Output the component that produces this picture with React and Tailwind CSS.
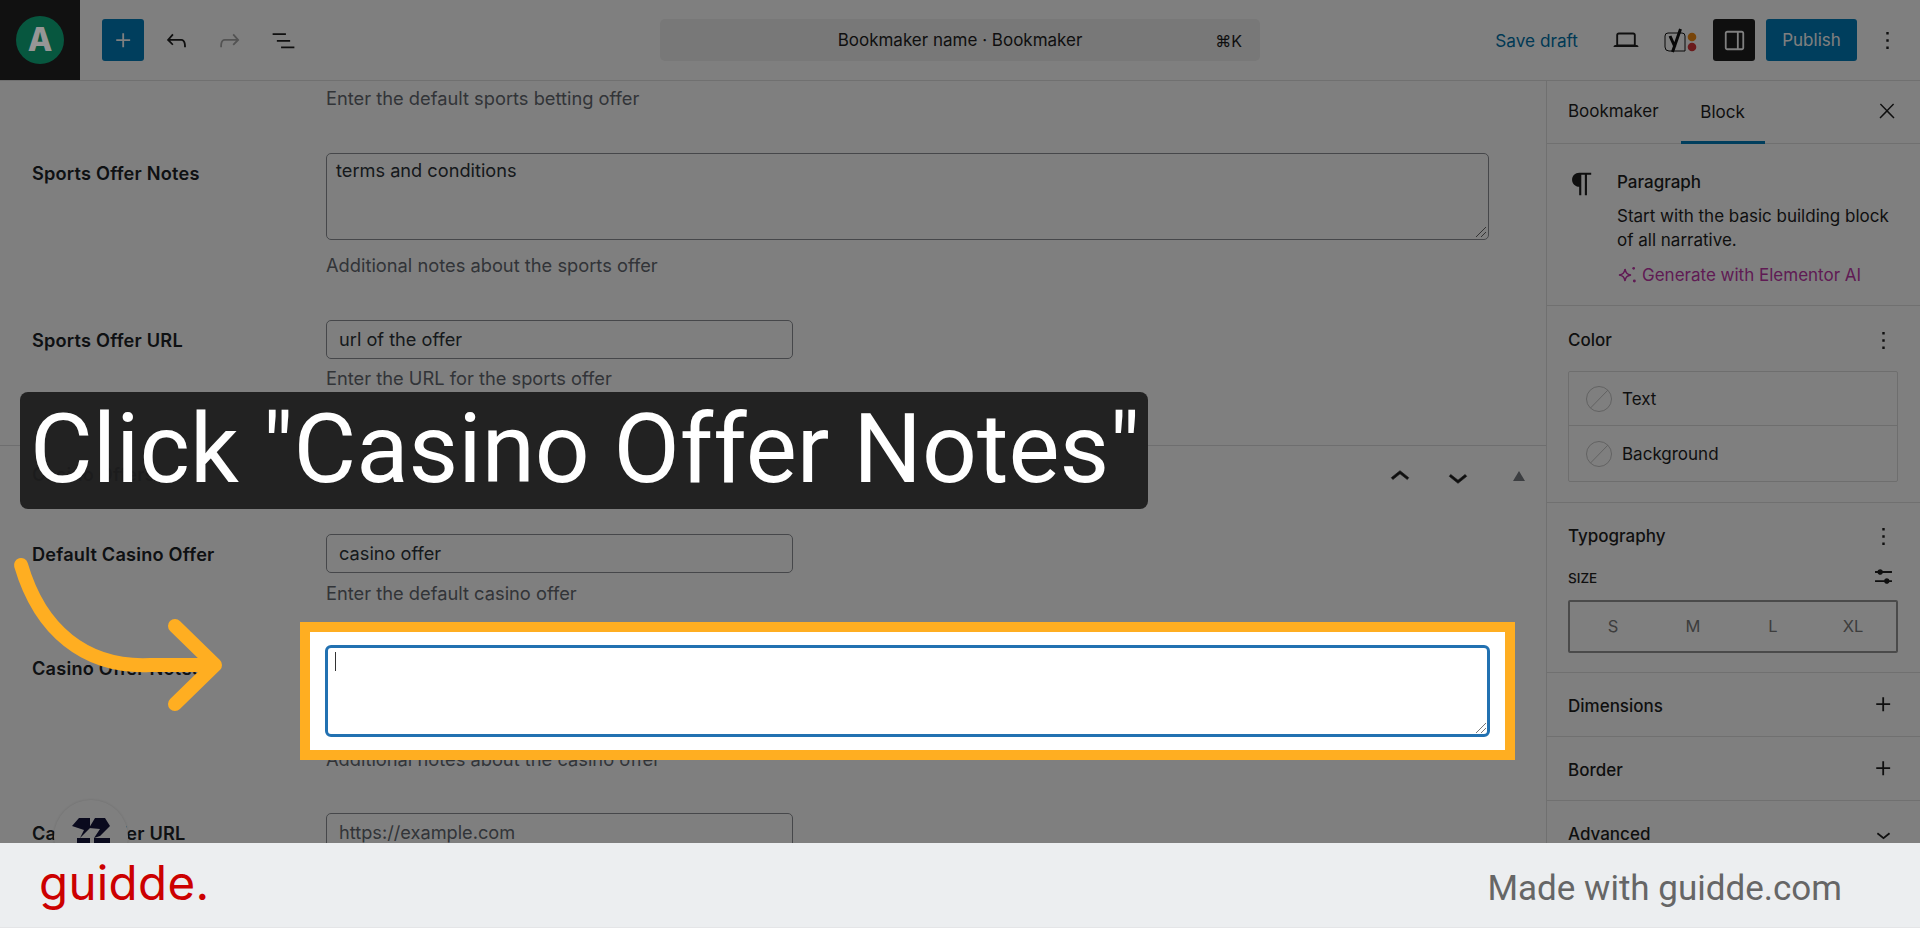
const Ic = ({ d, size = 29, className = "", fill = "currentColor" }) => (
  <svg viewBox="0 0 24 24" width={size} height={size} className={className} fill={fill}><path d={d} /></svg>
);
const P = {
  plus: "M11 12.5V17.5H12.5V12.5H17.5V11H12.5V6H11V11H6V12.5H11Z",
  undo: "M18.3 11.7c-.6-.6-1.4-.9-2.3-.9H6.7l2.9-3.3-1.1-1-4.5 5L8.5 16l1-1-2.7-2.7H16c.5 0 .9.2 1.3.5 1 1 1 3.4 1 4.5v.3h1.5v-.2c0-1.5 0-4.3-1.5-5.7z",
  redo: "M15.6 6.5l-1.1 1 2.9 3.3H8c-.9 0-1.7.3-2.3.9-1.4 1.5-1.4 4.2-1.4 5.6v.2h1.5v-.3c0-1.1 0-3.5 1-4.5.3-.3.7-.5 1.3-.5h9.2L14.5 15l1.1 1.1 4.6-4.6-4.6-5z",
  list: "M3 6h11v1.5H3V6zm3.5 5.5h11V13h-11v-1.5zM21 17H10v1.5h11V17z",
  desktop: "M20.5 16h-.7V8c0-1.1-.9-2-2-2H6.2c-1.1 0-2 .9-2 2v8h-.7c-.8 0-1.5.7-1.5 1.5h20c0-.8-.7-1.5-1.5-1.5zM5.7 8c0-.3.2-.5.5-.5h11.6c.3 0 .5.2.5.5v7.6H5.7V8z",
  sidebar: "M18 4H6c-1.1 0-2 .9-2 2v12c0 1.1.9 2 2 2h12c1.1 0 2-.9 2-2V6c0-1.1-.9-2-2-2zm-4 14.5H6c-.3 0-.5-.2-.5-.5V6c0-.3.2-.5.5-.5h8v13zm4.5-.5c0 .3-.2.5-.5.5h-2.5v-13H18c.3 0 .5.2.5.5v12z",
  dots: "M13 19h-2v-2h2v2zm0-6h-2v-2h2v2zm0-6h-2V5h2v2z",
  para: "m9.99609 14v-.2251l.00391.0001v6.225h1.5v-14.5h2.5v14.5h1.5v-14.5h3v-1.5h-8.50391c-2.76142 0-5 2.23858-5 5 0 2.7614 2.23858 5 5 5z",
  close: "M13 11.8l6.1-6.3-1-1-6.1 6.2-6.1-6.2-1 1 6.1 6.3-6.5 6.7 1 1 6.5-6.6 6.5 6.6 1-1z",
  up: "M6.5 12.4L12 8l5.5 4.4-.9 1.2L12 10l-4.5 3.6-1-1.2z",
  down: "M17.5 11.6L12 16l-5.5-4.4.9-1.2L12 14l4.5-3.6 1 1.2z",
  sliders: "M19 7.5h-7.628c-.3089-.87389-1.1423-1.5-2.122-1.5-.97966 0-1.81309.62611-2.12197 1.5h-2.12803v1.5h2.12803c.30888.87389 1.14231 1.5 2.12197 1.5.9797 0 1.8131-.62611 2.122-1.5h7.628zM19 15h-2.128c-.3089-.8739-1.1423-1.5-2.122-1.5s-1.8131.6261-2.122 1.5h-7.628v1.5h7.628c.3089.8739 1.1423 1.5 2.122 1.5s1.8131-.6261 2.122-1.5h2.128z",
};

const Field = ({ label, children, className = "", labelClass = "pt-[8px]" }) => (
  <div className={`grid grid-cols-[294px_1163px] pl-8 ${className}`}>
    <div className={`font-semibold text-[18.2px] tracking-[0.2px] leading-6 text-[#1d2327] ${labelClass}`}>{label}</div>
    <div>{children}</div>
  </div>
);

const Hint = ({ children, className = "" }) => (
  <p className={`ml-[326px] text-[18.3px] leading-6 text-[#646970] ${className}`}>{children}</p>
);

const TextInput = ({ value, placeholder }) => (
  <div className={`w-[467px] h-[39px] border border-[#8c8f94] rounded-[5px] px-3 flex items-center text-[18.2px] ${placeholder ? "text-[#646970]" : "text-[#2c3338]"}`}>{value}</div>
);

const Section = ({ title }) => (
  <div className="h-16 flex items-center justify-between pl-[21px] pr-[22px] pt-[4px] border-b border-[#e0e0e0] text-[17px] font-medium text-[#1e1e1e]">
    <span>{title}</span>
    <Ic d={P.plus} size={29} className="-mt-[4px]" />
  </div>
);

function Unset() {
  return (
    <svg width="30" height="30" viewBox="0 0 30 30" className="shrink-0">
      <circle cx="15" cy="15" r="12.5" fill="none" stroke="#c4c4c4" strokeWidth="1" />
      <path d="M6.500 24 L24 6" stroke="#c4c4c4" strokeWidth="1" />
    </svg>
  );
}

export default function App() {
  return (
    <div className="relative w-[1920px] h-[928px] overflow-hidden bg-white text-[#1e1e1e] font-['Inter',sans-serif]">
      {/* toolbar */}
      <header className="h-[81px] border-b border-[#e0e0e0] flex items-center">
        <div className="w-20 h-20 bg-[#222222] flex items-center justify-center shrink-0">
          <div className="w-12 h-12 rounded-full bg-[#0fae7f] flex items-center justify-center">
            <span className="relative z-30 text-[#969696] text-[32px] font-extrabold leading-none">A</span>
          </div>
        </div>
        <div className="w-[42px] h-[42px] ml-[22px] rounded-[3px] bg-[#007cba] text-white flex items-center justify-center">
          <Ic d={P.plus} size={29} />
        </div>
        <div className="flex items-center ml-[18px] gap-[24px]">
          <Ic d={P.undo} />
          <Ic d={P.redo} className="text-[#a7a7a7]" />
          <Ic d={P.list} className="ml-[1px]" />
        </div>
        <div className="absolute left-[660px] top-[19px] w-[600px] h-[42px] rounded-[5px] bg-[#f0f0f0] flex items-center justify-center text-[17px] text-[#1e1e1e] pt-[2px]">
          <span>Bookmaker name · Bookmaker</span>
          <span className="absolute right-[18px] text-[16px]">⌘K</span>
        </div>
        <div className="ml-auto flex items-center pr-[18px]">
          <span className="text-[17.2px] text-[#0073aa] mr-[33px] pt-[1px]">Save draft</span>
          <Ic d={P.desktop} size={30} className="mr-[23px]" />
          <svg width="33" height="26" viewBox="0 0 33 26" className="mr-[16px]">
            <path d="M4 6h14a3 3 0 0 1 3 3v15H5a4 4 0 0 1-4-4V9a3 3 0 0 1 3-3z" fill="none" stroke="#111" strokeWidth="1" />
            <path d="M6 9l5 11M16.500 2l-8 23" fill="none" stroke="#111" strokeWidth="3" />
            <circle cx="28" cy="10" r="4.300" fill="#f18a12" />
            <circle cx="28" cy="20" r="4.300" fill="#d63638" />
          </svg>
          <div className="w-[42px] h-[42px] rounded-[3px] bg-[#1e1e1e] text-white flex items-center justify-center mr-[11px]">
            <Ic d={P.sidebar} size={29} />
          </div>
          <div className="w-[91px] h-[42px] rounded-[3px] bg-[#007cba] text-white flex items-center justify-center text-[17px] pt-[2px]">Publish</div>
          <Ic d={P.dots} size={29} className="ml-[16px]" />
        </div>
      </header>

      <div className="flex h-[762px] overflow-hidden">
        {/* form */}
        <main className="w-[1546px] shrink-0 pt-[5px]">
          <Hint>Enter the default sports betting offer</Hint>
          <Field label="Sports Offer Notes" className="mt-[43px]">
            <div className="relative w-[1163px] h-[87px] border border-[#8c8f94] rounded-[5px] px-[9px] py-[4px] text-[18.2px] leading-6 text-[#2c3338]">
              terms and conditions
              <svg width="12" height="12" viewBox="0 0 12 12" className="absolute right-[1px] bottom-[1px]"><path d="M1 11 L11 1 M6 11 L11 6" stroke="#666" strokeWidth="1" /></svg>
            </div>
          </Field>
          <Hint className="mt-[13px]">Additional notes about the sports offer</Hint>
          <Field label="Sports Offer URL" className="mt-[43px]">
            <TextInput value="url of the offer" />
          </Field>
          <Hint className="mt-[7px]">Enter the URL for the sports offer</Hint>

          <div className="mt-[55px] border-t border-[#dcdcde] flex items-center justify-between h-[61px] pl-8 pr-[21px] pb-[3px]">
            <span className="font-semibold text-[18.2px] tracking-[0.2px] text-[#1d2327]">Casino Offers</span>
            <div className="flex items-center pt-[5px]">
              <Ic d={P.up} size={38} className="stroke-current stroke-[0.4px]" />
              <Ic d={P.down} size={38} className="ml-[20px] stroke-current stroke-[0.4px]" />
              <svg width="12" height="10" viewBox="0 0 12 10" className="ml-[36px] mb-[2px] text-[#787c82]" fill="currentColor"><path d="M6 0l6 10H0z" /></svg>
            </div>
          </div>

          <Field label="Default Casino Offer" className="mt-[28px]">
            <TextInput value="casino offer" />
          </Field>
          <Hint className="mt-2">Enter the default casino offer</Hint>
          <Field label="Casino Offer Notes" className="mt-[40px]" labelClass="pt-[11px]">
            <div className="h-[90px]" />
          </Field>
          <Hint className="mt-3">Additional notes about the casino offer</Hint>
          <Field label="Casino Offer URL" className="mt-[42px]">
            <TextInput value="https://example.com" placeholder />
          </Field>
        </main>

        {/* sidebar */}
        <aside className="flex-1 border-l border-[#e0e0e0] text-[#1e1e1e]">
          <div className="h-[63px] border-b border-[#e0e0e0] flex items-center relative">
            <div className="ml-[21px] text-[17px]">Bookmaker</div>
            <div className="ml-[22px] h-full w-[84px] flex items-center justify-center text-[17px] border-b-[3px] border-[#007cba] pt-[3px] box-border mb-[-1px]">Block</div>
            <Ic d={P.close} size={24} className="absolute right-[21px] top-[18px]" />
          </div>
          <div className="h-[162px] border-b border-[#e0e0e0] flex pl-[21px] pr-[20px] pt-[25px]">
            <Ic d={P.para} size={34} className="shrink-0 -ml-[3px] -mt-[2px]" />
            <div className="ml-[18px] text-[17px] leading-6">
              <div className="font-medium h-[26px] pt-[1px]">Paragraph</div>
              <div className="mt-[9px]">Start with the basic building block of all narrative.</div>
              <div className="mt-[11px] flex items-center text-[#c036a8] gap-[5px]">
                <svg width="20" height="20" viewBox="1 1.500 15 15" fill="none" stroke="currentColor" strokeWidth="1.100"><path d="M7 4.500c.6 3 1.500 4 4.500 4.500-3 .6-4 1.500-4.500 4.500-.6-3-1.500-4-4.500-4.500 3-.6 4-1.500 4.500-4.500z" /><circle cx="13.500" cy="4" r="1" fill="currentColor" stroke="none" /><circle cx="14" cy="13.500" r="1.100" fill="currentColor" stroke="none" /></svg>
                Generate with Elementor AI
              </div>
            </div>
          </div>
          <div className="h-[197px] border-b border-[#e0e0e0] px-[21px] pt-[20px]">
            <div className="flex items-center justify-between h-[29px]">
              <span className="text-[17px] font-medium">Color</span>
              <Ic d={P.dots} size={29} className="mr-[1px]" />
            </div>
            <div className="mt-[16px] w-[330px] border border-[#dcdcdc] rounded-[2px]">
              <div className="h-[54px] flex items-center gap-[8px] pl-[15px] border-b border-[#dcdcdc] text-[17px]"><Unset /><span className="pt-[2px]">Text</span></div>
              <div className="h-[55px] flex items-center gap-[8px] pl-[15px] text-[17px]"><Unset /><span className="pt-[3px]">Background</span></div>
            </div>
          </div>
          <div className="h-[170px] border-b border-[#e0e0e0] px-[21px] pt-[19px]">
            <div className="flex items-center justify-between h-[29px]">
              <span className="text-[17px] font-medium">Typography</span>
              <Ic d={P.dots} size={29} className="mr-[1px]" />
            </div>
            <div className="flex items-center justify-between h-[29px] mt-[13px]">
              <span className="text-[13.5px] font-medium">SIZE</span>
              <Ic d={P.sliders} size={29} className="mr-[1px] -mt-[5px]" />
            </div>
            <div className="mt-[7px] w-[330px] h-[53px] px-[3px] border-2 border-[#949494] rounded-[2px] grid grid-cols-4 items-center text-center text-[16.5px] text-[#7a7a7a]">
              <span>S</span><span>M</span><span>L</span><span>XL</span>
            </div>
          </div>
          <Section title="Dimensions" />
          <Section title="Border" />
          <div className="h-16 flex items-center justify-between pl-[21px] pr-[22px] pt-[3px] text-[17px] font-medium">
            <span>Advanced</span>
            <Ic d={P.down} size={29} />
          </div>
        </aside>
      </div>

      {/* footer */}
      <footer className="relative z-30 h-[85px] bg-[#eceef0] border-b border-[#e4e5e7] flex items-center justify-between pl-[39px] pr-[78px]">
        <span className="font-['Inter',sans-serif] text-[47.5px] tracking-[0.3px] leading-none text-[#cc0000] -mt-[5px]">guidde.</span>
        <span className="font-['Roboto',sans-serif] text-[35px] text-[#666666] mt-[8px]">Made with guidde.com</span>
      </footer>

      {/* floating widget, under the dim layer */}
      <div className="absolute z-10 left-[54px] top-[800px] w-[74px] h-[74px] rounded-full bg-white shadow-[0_0_3px_rgba(0,0,0,0.15)] flex items-start justify-center pt-[18px]">
        <svg width="38" height="26" viewBox="0 0 38 26" fill="#14143c">
          <path d="M7 0H18V10L8 20L12 12L0 8z" />
          <path d="M23 0H33L38 8L28 18L22 20L28 11L17 10z" />
          <path d="M5 20H18V26H5zM22 20H38V26H22z" />
        </svg>
      </div>

      {/* dim layer */}
      <div className="absolute inset-0 z-20 bg-black/50 pointer-events-none" />

      {/* highlighted field */}
      <div className="absolute z-30 left-[300px] top-[622px] w-[1215px] h-[138px] border-[10px] border-[#ffae21] bg-white">
        <div className="absolute left-[15px] top-[13px] w-[1165px] h-[92px] border-[3px] border-[#2271b1] rounded-[6px]">
          <div className="absolute left-[7px] top-[4px] w-px h-[19px] bg-[#333]" />
          <svg width="12" height="12" viewBox="0 0 12 12" className="absolute right-0 bottom-0"><path d="M1 11 L11 1 M6 11 L11 6" stroke="#777" strokeWidth="1" /></svg>
        </div>
      </div>

      {/* arrow */}
      <svg className="absolute z-30 left-0 top-[550px]" width="240" height="170" viewBox="0 0 240 170" fill="none" stroke="#ffae21" strokeWidth="14" strokeLinecap="round" strokeLinejoin="round">
        <path d="M21 15 C 40 80, 85 118, 150 115 L 212 115" />
        <path d="M175 76 L 215 115 L 175 154" />
      </svg>

      {/* caption */}
      <div className="absolute z-30 left-5 top-[392px] w-[1128px] h-[117px] rounded-lg bg-[#1d1d1d]/95 flex items-center pl-[10px] font-['Roboto',sans-serif] text-[96.300px] leading-none text-white whitespace-nowrap">
        Click "Casino Offer Notes"
      </div>
    </div>
  );
}
